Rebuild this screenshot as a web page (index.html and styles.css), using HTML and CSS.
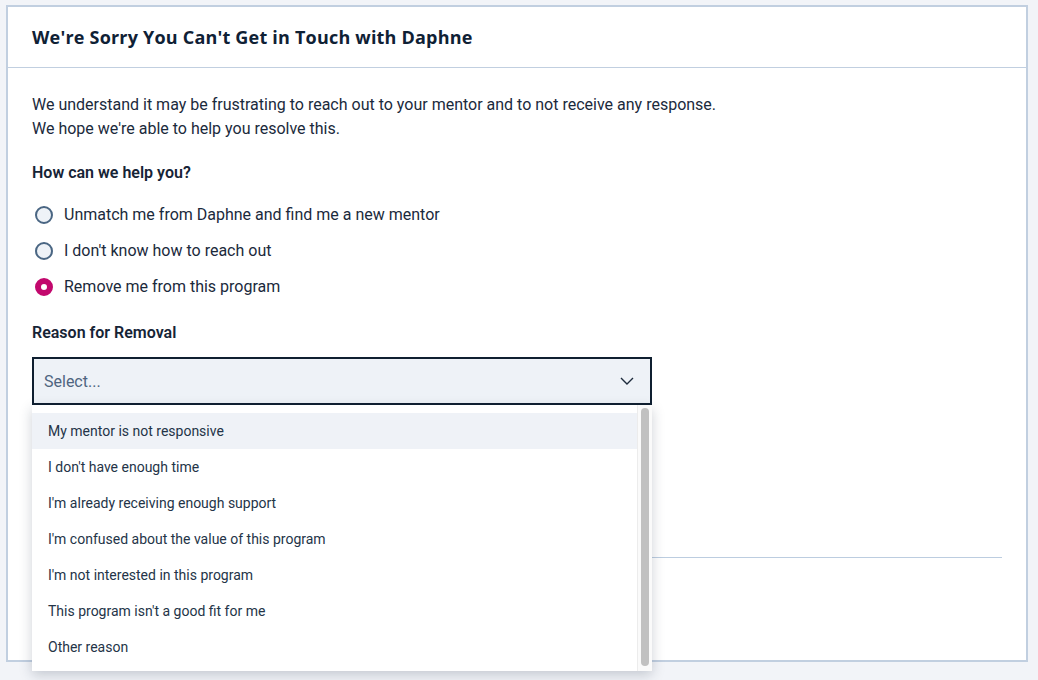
FILE: index.html
```html
<!DOCTYPE html>
<html lang="en">
  <head>
    <meta charset="UTF-8" />
    <title>Contact issue</title>
    <link rel="stylesheet" href="styles.css">
  </head>
  <body>
    <div class="card">
      <div class="card-header">
        <h1>We're Sorry You Can't Get in Touch with Daphne</h1>
      </div>

      <div class="card-body">
        <p class="intro">
          We understand it may be frustrating to reach out to your mentor and to not receive any response.<br>
          We hope we're able to help you resolve this.
        </p>

        <p class="label">How can we help you?</p>

        <div class="radios">
          <label class="radio"><span class="dot"></span>Unmatch me from Daphne and find me a new mentor</label>
          <label class="radio"><span class="dot"></span>I don't know how to reach out</label>
          <label class="radio"><span class="dot checked"></span>Remove me from this program</label>
        </div>

        <p class="label reason">Reason for Removal</p>

        <div class="select-wrap">
          <div class="select">
            <span>Select...</span>
            <svg width="14" height="8" viewBox="0 0 14 8"><path d="M1 1l6 6 6-6" fill="none" stroke="#1d2b3c" stroke-width="1.4"/></svg>
          </div>

          <div class="menu">
            <ul class="options">
              <li class="active">My mentor is not responsive</li>
              <li>I don't have enough time</li>
              <li>I'm already receiving enough support</li>
              <li>I'm confused about the value of this program</li>
              <li>I'm not interested in this program</li>
              <li>This program isn't a good fit for me</li>
              <li>Other reason</li>
            </ul>
            <div class="scroll"><div class="thumb"></div></div>
          </div>
        </div>

        <div class="footer"></div>
      </div>
    </div>
  </body>
</html>
```

FILE: styles.css
```css
* {
  margin: 0;
  padding: 0;
  box-sizing: border-box;
}

html,
body {
  height: 100%;
}

body {
  background-color: #f2f4f8;
  font-family: Roboto, "Liberation Sans", sans-serif;
  color: #162436;
  padding: 5px 10px 18px 6px;
}

.card {
  background-color: white;
  border: 2px solid #c1cfe0;
  height: 100%;
}

.card-header {
  height: 61px;
  border-bottom: 1px solid #c1cfe0;
  padding: 0 24px;
  display: flex;
  align-items: center;
}

.card-header h1 {
  font-family: "Open Sans", Roboto, sans-serif;
  font-size: 18px;
  font-weight: 700;
  letter-spacing: 0.2px;
  color: #0f2135;
}

.card-body {
  padding: 25px 24px 0 24px;
}

.intro {
  font-size: 16px;
  line-height: 24px;
  color: #1b2a3c;
}

.label {
  margin-top: 20px;
  font-size: 16px;
  font-weight: 600;
  line-height: 24px;
  color: #162436;
}

.radios {
  margin-top: 18px;
  display: flex;
  flex-flow: column;
  gap: 12px;
}

.radio {
  display: flex;
  align-items: center;
  gap: 11px;
  font-size: 16px;
  line-height: 24px;
  color: #1b2a3c;
}

.dot {
  width: 18px;
  height: 18px;
  margin-left: 3px;
  border-radius: 50%;
  border: 2.5px solid #4a6683;
  background-color: #eef2f7;
}

.dot.checked {
  border: 6.5px solid #c2086d;
  background-color: white;
}

.reason {
  margin-top: 22px;
}

.select-wrap {
  position: relative;
  margin-top: 12px;
  padding-bottom: 152px;
  border-bottom: 1px solid #bccde0;
}

.select {
  width: 620px;
  height: 48px;
  border: 2px solid #0f1f30;
  background-color: #eef2f7;
  display: flex;
  align-items: center;
  justify-content: space-between;
  padding: 0 16px 0 10px;
  font-size: 16px;
  color: #4f6580;
}

.menu {
  position: absolute;
  top: 48px;
  left: 0;
  z-index: 2;
  width: 620px;
  height: 266px;
  background-color: white;
  box-shadow: 0 4px 12px rgba(30, 45, 70, 0.22);
  display: flex;
}

.options {
  list-style: none;
  flex: 1;
  padding-top: 8px;
}

.options li {
  height: 36px;
  line-height: 36px;
  padding-left: 16px;
  font-size: 14px;
  color: #243448;
}

.options li.active {
  background-color: #eff2f7;
}

.scroll {
  width: 15px;
  border-left: 1px solid #ececec;
  background-color: #fafafa;
  padding: 3px 3px 5px 3px;
}

.thumb {
  height: 100%;
  background-color: #c1c1c1;
  border-radius: 5px;
}
```
